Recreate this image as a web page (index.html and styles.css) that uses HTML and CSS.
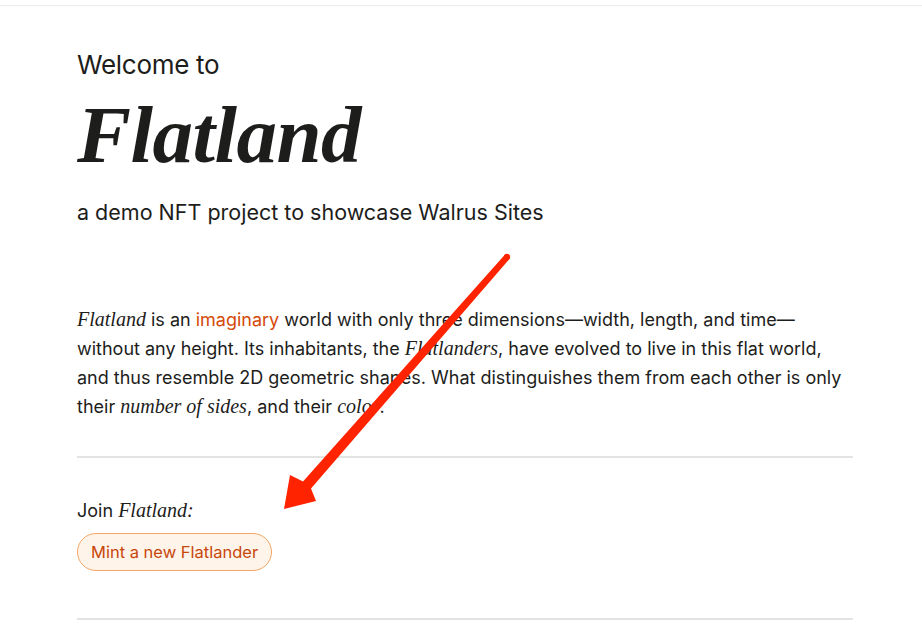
FILE: index.html
```html
<!DOCTYPE html>
<html lang="en">
<head>
<meta charset="utf-8">
<title>Flatland</title>
<link rel="stylesheet" href="styles.css">
</head>
<body>
<div class="topbar"></div>
<main class="page">
  <header class="hero">
    <p class="welcome">Welcome to</p>
    <h1 class="title">Flatland</h1>
    <p class="subtitle">a demo NFT project to showcase Walrus Sites</p>
  </header>
  <p class="intro"><em class="serif">Flatland</em> is an <a class="link" href="#">imaginary</a> world with only three dimensions—width, length, and time—without any height. Its inhabitants, the <em class="serif">Flatlanders</em>, have evolved to live in this flat world, and thus resemble 2D geometric shapes. What distinguishes them from each other is only their <em class="serif">number of sides</em>, and their <em class="serif">color</em>.</p>
  <hr class="rule">
  <section class="join">
    <p class="join-label">Join <em class="serif">Flatland:</em></p>
    <button class="mint">Mint a new Flatlander</button>
  </section>
  <hr class="rule rule-end">
</main>
<svg class="arrow" width="922" height="640" viewBox="0 0 922 640" aria-hidden="true">
  <circle cx="507" cy="257" r="3.2" fill="#ff2300"/>
  <polygon fill="#ff2300" points="504.6,254.9 509.4,259.1 311,488.5 316,501 284,509 290,475 303,481.5"/>
</svg>
</body>
</html>
```
FILE: styles.css
```css
html, body {
  margin: 0;
  padding: 0;
  background: #ffffff;
}
body {
  font-family: Inter, "Noto Sans", "Liberation Sans", sans-serif;
  color: #1d1d1b;
}
.topbar {
  height: 5px;
  border-bottom: 1px solid #efefef;
  box-shadow: 0 1px 2px rgba(0,0,0,0.03);
}
.page {
  padding: 0 69px 0 77px;
}
.hero {
  padding-top: 42px;
}
.welcome {
  margin: 0;
  font-size: 26px;
  line-height: 34px;
  letter-spacing: -0.3px;
}
.title {
  margin: 11px 0 0;
  font-family: "Liberation Serif", "DejaVu Serif", serif;
  font-style: italic;
  font-weight: 700;
  font-size: 81px;
  line-height: 84px;
  letter-spacing: -0.5px;
}
.subtitle {
  margin: 20px 0 0;
  font-size: 21.5px;
  line-height: 30px;
  letter-spacing: 0;
}
.intro {
  margin: 78px 0 0;
  font-size: 18px;
  line-height: 28.4px;
  letter-spacing: 0;
}
.serif {
  font-family: "Liberation Serif", "DejaVu Serif", serif;
  font-size: 20px;
  font-style: italic;
}
.link {
  color: #d44a0a;
  text-decoration: none;
}
.rule {
  margin: 34px 0 0;
  border: none;
  border-top: 2px solid #e3e3e1;
  height: 0;
}
.join {
  padding-top: 38px;
}
.join-label {
  margin: 0;
  font-size: 18px;
  line-height: 28px;
  letter-spacing: 0;
}
.mint {
  margin-top: 8px;
  display: inline-block;
  padding: 0 13px;
  height: 38px;
  border: 1px solid #f2a766;
  background: #fff4e9;
  border-radius: 19px;
  color: #c8470b;
  font-family: Inter, "Noto Sans", "Liberation Sans", sans-serif;
  font-size: 16.5px;
  letter-spacing: 0;
}
.rule-end {
  margin-top: 47px;
}
.arrow {
  position: absolute;
  left: 0;
  top: 0;
  pointer-events: none;
}
```
